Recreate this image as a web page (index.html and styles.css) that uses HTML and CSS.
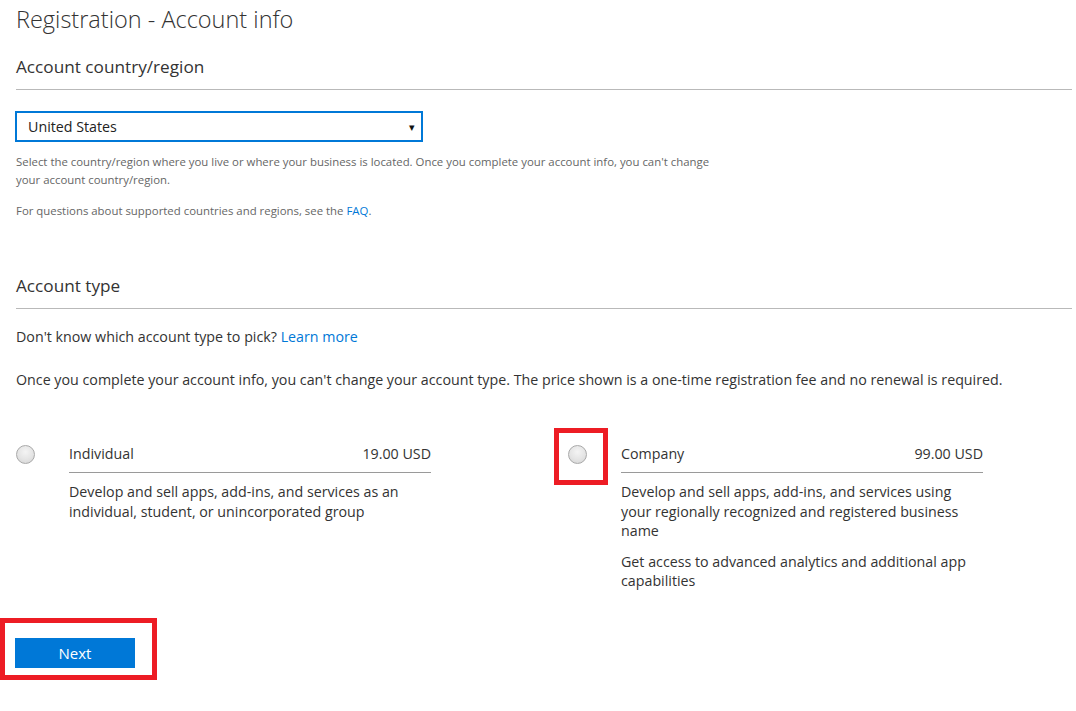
FILE: index.html
```html
<!DOCTYPE html>
<html lang="en">
<head>
<meta charset="utf-8">
<title>Registration - Account info</title>
<link rel="stylesheet" href="styles.css">
</head>
<body>
<main class="page">
  <h1 class="title">Registration - Account info</h1>

  <section class="section">
    <h2 class="section-title">Account country/region</h2>
    <div class="select">
      <span class="select-value">United States</span>
      <span class="select-arrow">&#9662;</span>
    </div>
    <p class="help help-first">Select the country/region where you live or where your business is located. Once you complete your account info, you can't change your account country/region.</p>
    <p class="help help-second">For questions about supported countries and regions, see the <a class="link" href="#">FAQ</a>.</p>
  </section>

  <section class="section section-type">
    <h2 class="section-title">Account type</h2>
    <p class="body-text body-first">Don't know which account type to pick? <a class="link" href="#">Learn more</a></p>
    <p class="body-text body-second">Once you complete your account info, you can't change your account type. The price shown is a one-time registration fee and no renewal is required.</p>

    <div class="options">
      <div class="option">
        <div class="radio-wrap"><span class="radio"></span></div>
        <div class="option-body">
          <div class="option-head">
            <span class="option-name">Individual</span>
            <span class="option-price">19.00 USD</span>
          </div>
          <p class="option-desc">Develop and sell apps, add-ins, and services as an individual, student, or unincorporated group</p>
        </div>
      </div>
      <div class="option">
        <div class="radio-wrap"><span class="radio"></span><span class="callout callout-radio"></span></div>
        <div class="option-body">
          <div class="option-head">
            <span class="option-name">Company</span>
            <span class="option-price">99.00 USD</span>
          </div>
          <p class="option-desc">Develop and sell apps, add-ins, and services using your regionally recognized and registered business name</p>
          <p class="option-desc option-desc-extra">Get access to advanced analytics and additional app capabilities</p>
        </div>
      </div>
    </div>
  </section>

  <div class="actions">
    <button class="next" type="button">Next</button>
    <span class="callout callout-next"></span>
  </div>
</main>
</body>
</html>
```

FILE: styles.css
```css
* { box-sizing: border-box; }

html, body {
  margin: 0;
  padding: 0;
  background: #ffffff;
}

body {
  font-family: "Open Sans", "Noto Sans", sans-serif;
  color: #333333;
  min-height: 711px;
}

.page {
  padding: 0 4px 40px 16px;
  width: 1076px;
}

.title {
  margin: 5px 0 0;
  font-size: 23.5px;
  line-height: 28px;
  font-weight: 300;
  color: #333333;
}

.section-title {
  margin: 22px 0 0;
  padding-bottom: 10px;
  border-bottom: 1px solid #b9b9b9;
  font-size: 17.2px;
  line-height: 24px;
  font-weight: 400;
  color: #333333;
}

.section-type .section-title {
  margin-top: 54px;
}

.select {
  margin-top: 21px;
  margin-left: -1px;
  width: 408px;
  height: 31px;
  border: 2px solid #0078d7;
  display: flex;
  align-items: center;
  justify-content: space-between;
  padding: 0 6px 0 11px;
  font-size: 14.25px;
  color: #222222;
}

.select-arrow {
  font-size: 11px;
  color: #111111;
}

.help {
  margin: 0;
  font-size: 11.4px;
  line-height: 18px;
  color: #666666;
  max-width: 700px;
}

.help-first { margin-top: 11px; }
.help-second { margin-top: 13px; }

.link {
  color: #0078d7;
  text-decoration: none;
}

.body-text {
  margin: 0;
  font-size: 14.25px;
  line-height: 20px;
  color: #333333;
}

.body-first { margin-top: 18px; }
.body-second { margin-top: 23px; }

.options {
  margin-top: 54px;
  display: grid;
  grid-template-columns: 552px 416px;
}

.option {
  display: flex;
  align-items: flex-start;
}

.radio-wrap {
  position: relative;
  width: 53px;
  flex: none;
  padding-top: 1px;
}

.radio {
  display: block;
  width: 19px;
  height: 19px;
  border-radius: 50%;
  border: 1px solid #a9a9a9;
  background: radial-gradient(circle at 50% 35%, #f4f4f4 0%, #e4e4e4 55%, #d2d2d2 100%);
}

.option-body {
  width: 362px;
}

.option-head {
  display: flex;
  justify-content: space-between;
  padding-bottom: 8px;
  border-bottom: 1px solid #9a9a9a;
  font-size: 14.25px;
  line-height: 20px;
  color: #333333;
}

.option-desc {
  margin: 9px 0 0;
  font-size: 14.25px;
  line-height: 19.5px;
  color: #333333;
}

.option-desc-extra {
  margin-top: 11px;
}

.actions {
  position: relative;
  margin-top: 47px;
  margin-left: -1px;
  width: 120px;
  height: 30px;
}

.next {
  display: block;
  width: 120px;
  height: 30px;
  border: none;
  background: #0078d7;
  color: #ffffff;
  font-family: "Open Sans", "Noto Sans", sans-serif;
  font-size: 15px;
  font-weight: 400;
  padding: 0;
}

.callout {
  position: absolute;
  border: 5px solid #ed1c24;
  pointer-events: none;
}

.callout-radio {
  left: -14px;
  top: -16px;
  width: 54px;
  height: 57px;
}

.callout-next {
  left: -15px;
  top: -20px;
  width: 157px;
  height: 62px;
}
```
